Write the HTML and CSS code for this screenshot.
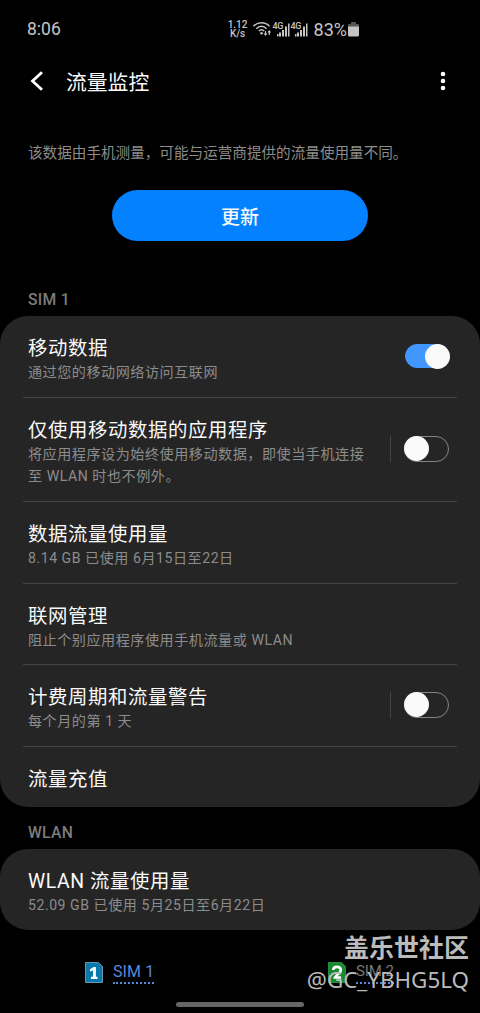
FILE: index.html
```html
<!DOCTYPE html>
<html lang="zh-CN">
<head>
<meta charset="utf-8">
<title>流量监控</title>
<link rel="stylesheet" href="styles.css">
</head>
<body>
<div class="screen">
  <div class="status">
    <span class="clock">8:06</span>
    <div class="indicators">
      <div class="speed"><span>1.12</span><span>K/s</span></div>
      <svg class="wifi" width="20" height="17" viewBox="0 0 20 17" fill="none" stroke="#c4c4c4" stroke-width="1.5">
        <path d="M.5 5.200C5 .5 12 .5 16.500 5.200M3.400 7.700C6.300 4.400 10.700 4.400 13.600 7.700M5.900 10.100C7.500 8.400 9.500 8.400 11.100 10.100"/>
        <circle cx="8.500" cy="12.200" r="1.300" fill="#c4c4c4" stroke="none"/>
        <path d="M12.500 10v4M16.300 14V10" stroke-width="1.200"/>
        <path d="M10.600 12.500h3.800l-1.900 2.500zM14.400 11.500h3.800l-1.900-2.500z" fill="#c4c4c4" stroke="none"/>
      </svg>
      <div class="signal"><span>4G</span>
        <svg width="18" height="15" viewBox="0 0 18 15" fill="#c4c4c4"><path d="M4 12h1.500v2.500H4zM6 10.500h2v4H6zM9 8h2v6.500H9zM12 4.500h2v10h-2zM15 1.500h1.500v13H15z"/></svg>
      </div>
      <div class="signal"><span>4G</span>
        <svg width="18" height="15" viewBox="0 0 18 15" fill="#c4c4c4"><path d="M4 12h1.500v2.500H4zM6 10.500h2v4H6zM9 8h2v6.500H9zM12 4.500h2v10h-2zM15 1.500h1.500v13H15z"/></svg>
      </div>
      <span class="percent">83%</span>
      <svg class="battery" width="11" height="15" viewBox="0 0 11 15"><path d="M3 0h5v2h2q1 0 1 1v2H0V3q0-1 1-1h2z" fill="#555"/><path d="M0 4.500h11V13q0 1.500-1.500 1.500h-8Q0 14.500 0 13z" fill="#c4c4c4"/></svg>
    </div>
  </div>

  <header class="appbar">
    <svg class="back" width="14" height="20" viewBox="0 0 14 20" fill="none" stroke="#fff" stroke-width="2.800"><path d="M12 1.200 2.500 10l9.500 8.800"/></svg>
    <h1>流量监控</h1>
    <svg class="more" width="6" height="20" viewBox="0 0 6 20" fill="#fff"><circle cx="3" cy="3" r="2.300"/><circle cx="3" cy="10" r="2.300"/><circle cx="3" cy="17" r="2.300"/></svg>
  </header>

  <p class="notice">该数据由手机测量，可能与运营商提供的流量使用量不同。</p>
  <button class="update">更新</button>

  <h2 class="section">SIM 1</h2>
  <section class="card">
    <div class="row">
      <div class="text"><h3>移动数据</h3><p>通过您的移动网络访问互联网</p></div>
      <div class="control"><span class="toggle on"></span></div>
    </div>
    <div class="row">
      <div class="text"><h3>仅使用移动数据的应用程序</h3><p>将应用程序设为始终使用移动数据，即使当手机连接<br>至 WLAN 时也不例外。</p></div>
      <div class="control split"><span class="toggle"></span></div>
    </div>
    <div class="row">
      <div class="text"><h3>数据流量使用量</h3><p>8.14 GB 已使用 6月15日至22日</p></div>
    </div>
    <div class="row compact">
      <div class="text"><h3>联网管理</h3><p>阻止个别应用程序使用手机流量或 WLAN</p></div>
    </div>
    <div class="row">
      <div class="text"><h3>计费周期和流量警告</h3><p>每个月的第 1 天</p></div>
      <div class="control split"><span class="toggle"></span></div>
    </div>
    <div class="row single">
      <div class="text"><h3>流量充值</h3></div>
    </div>
  </section>

  <h2 class="section wlan">WLAN</h2>
  <section class="card">
    <div class="row last">
      <div class="text"><h3>WLAN 流量使用量</h3><p>52.09 GB 已使用 5月25日至6月22日</p></div>
    </div>
  </section>

  <nav class="tabs">
    <div class="tab active">
      <svg width="18" height="21" viewBox="0 0 18 21"><path d="M.5.500h13l4 4v16H.5z" fill="#0a78ad" stroke="#6e98a8"/><path d="M5 7.200 8.700 5h2.200v9.700h1.600V17H6v-2.300h2V8.500L5 9.500z" fill="#fff"/></svg>
      <span class="label">SIM 1</span>
    </div>
    <div class="tab">
      <svg width="18" height="21" viewBox="0 0 18 21"><path d="M.5.500h13l4 4v16H.5z" fill="#178a32" stroke="#278c3e"/><path d="M5.200 8C5.500 3.800 12.800 3.800 12.800 8.200c0 2.800-4.800 4.600-5.800 7.300h6" fill="none" stroke="#fff" stroke-width="2.600"/></svg>
      <span class="label">SIM 2</span>
    </div>
  </nav>
  <div class="homebar"></div>

  <div class="watermark"><strong>盖乐世社区</strong><span>@GC_YBHG5LQ</span></div>
</div>
</body>
</html>
```
FILE: styles.css
```css
* { box-sizing: border-box; }
body { margin: 0; background: #000; font-family: Roboto, "Noto Sans CJK SC", sans-serif; }
h1, h2, h3, p { margin: 0; font-weight: 400; }
svg { display: block; flex: none; }
.screen { position: relative; width: 480px; height: 1013px; overflow: hidden; display: flex; flex-direction: column; background: #000; color: #fafafa; }

.status { height: 50px; flex: none; padding: 10px 121px 0 27px; display: flex; justify-content: space-between; align-items: flex-start; color: #c4c4c4; }
.clock, .percent { font-size: 18px; line-height: 39px; }
.clock { font-size: 17.5px; }
.indicators { display: flex; align-items: center; height: 38px; }
.speed { display: flex; flex-direction: column; align-items: center; width: 20px; margin-right: 5px; font-size: 10px; line-height: 9px; font-weight: 500; }
.signal { position: relative; width: 18px; }
.signal span { position: absolute; left: 0; top: 0; font-size: 9px; line-height: 9px; font-weight: 500; letter-spacing: -.4px; }
.percent { margin: 0 1px 0 5px; }

.appbar { height: 62px; flex: none; padding: 0 34px 0 30px; display: flex; align-items: center; }
.appbar h1 { flex: 1; margin: 3px 0 0 22px; font-size: 20.8px; line-height: 30px; }
.notice { margin: 30px 0 0 28px; font-size: 14.6px; line-height: 22px; color: #8c8c8c; white-space: nowrap; }
.update { flex: none; align-self: center; width: 256px; height: 51px; margin-top: 26px; border: 0; border-radius: 26px; background: #0381fe; color: #fafafa; font: 500 19px/51px Roboto, "Noto Sans CJK SC", sans-serif; padding: 2px 0 0; }

.section { margin: 49px 0 0 28px; height: 26px; flex: none; font-size: 15.7px; line-height: 20px; font-weight: 500; letter-spacing: .3px; color: #7c7c7c; }
.section.wlan { margin-top: 16px; }
.card { flex: none; border-radius: 28px; background: #252525; }
.row { display: flex; align-items: stretch; justify-content: space-between; margin: 0 23px; padding: 20px 8px 14px 5px; border-bottom: 1px solid #444; }
.row.compact { padding-bottom: 13px; }
.row.single { height: 60px; border: 0; padding-bottom: 0; }
.row.last { border: 0; }
.text h3 { font-size: 19.4px; line-height: 25px; letter-spacing: .6px; }
.text p { font-size: 14.1px; line-height: 22px; letter-spacing: .53px; color: #8c8c8c; white-space: nowrap; }
.control { display: flex; align-items: center; align-self: center; height: 26px; padding-left: 13px; margin-bottom: 7px; }
.control.split { border-left: 1px solid #444; }
.toggle { display: block; position: relative; width: 45px; height: 26px; border: 1px solid #858585; border-radius: 13px; }
.toggle::after { content: ""; position: absolute; left: -1px; top: -1px; width: 25px; height: 25px; border-radius: 50%; background: #fafafa; }
.toggle.on { width: 44px; height: 24px; border-color: #4297ff; background: #4297ff; }
.toggle.on::after { left: 19px; top: -1.5px; }

.tabs { display: flex; padding: 32px 0 0 85px; height: 72px; flex: none; }
.tab { display: flex; width: 243px; gap: 10px; color: #777; }
.tab:last-child { width: auto; }
.tab:last-child .label { font-size: 15px; letter-spacing: -.1px; }
.tab.active { color: #5589d8; }
.label { height: 22px; font-size: 16px; line-height: 19px; letter-spacing: .1px; border-bottom: 2px dotted #5589d8; }
.homebar { flex: none; width: 128px; height: 5px; margin-left: 176px; border-radius: 3px; background: #666; }

.watermark { position: absolute; right: 11px; top: 930px; display: flex; flex-direction: column; align-items: flex-end; color: #bbb; }
.watermark strong { font: 700 25px/33px "Noto Sans CJK SC", sans-serif; }
.watermark span { font: 400 22.4px/33px "Noto Sans", sans-serif; }
```
